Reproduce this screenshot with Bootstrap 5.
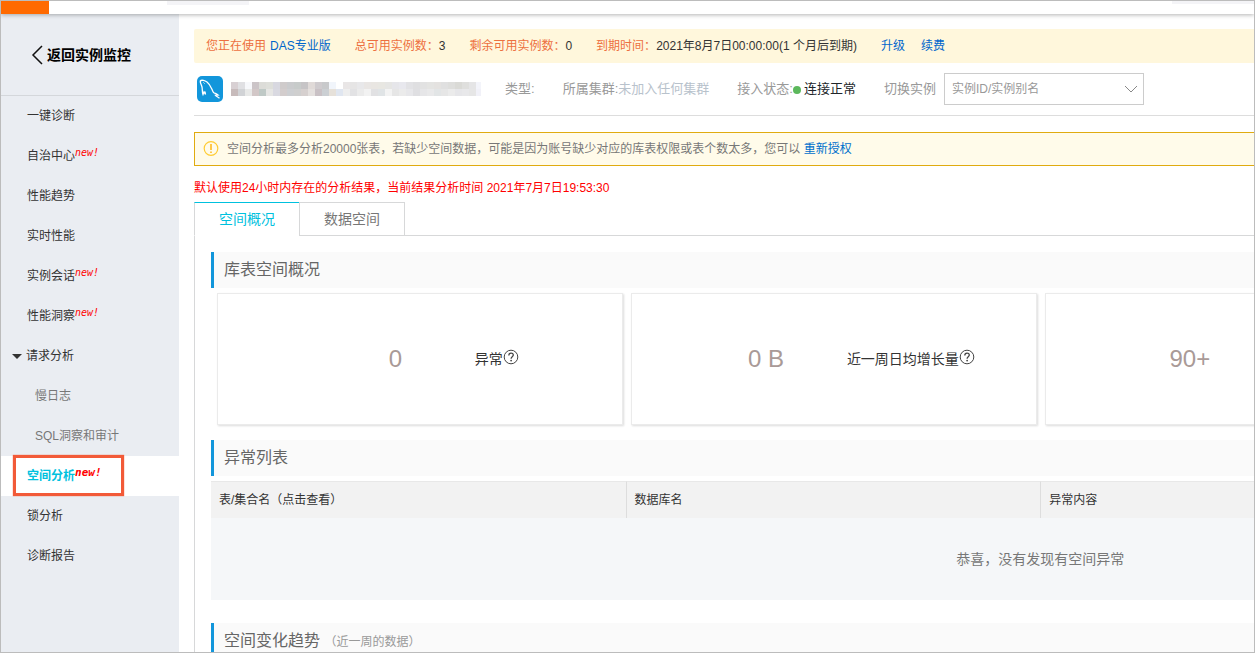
<!DOCTYPE html>
<html lang="zh-CN">
<head>
<meta charset="utf-8">
<meta name="viewport" content="width=device-width, initial-scale=1">
<title>空间分析</title>
<link href="https://cdn.jsdelivr.net/npm/bootstrap@5.3.0/dist/css/bootstrap.min.css" rel="stylesheet">
<style>
body{font:12px/20px "Liberation Sans","Noto Sans CJK SC",sans-serif;color:#333}
a{text-decoration:none;color:#06c}
.shell{border:1px solid #bcbcbc}
.topbar{height:13px;box-shadow:0 1px 4px rgba(0,0,0,.3);z-index:2}
.brand-block{width:48px;background:#ff6a00}
.top-field{width:82px;height:4px;background:#f4f4f7;margin-left:118px}
.top-end{width:82px;height:3px;background:#f4f4f7}
.side{width:178px;background:#eaedf2}
.back{height:82px;border-bottom:1px solid #d4d7db;font-size:14px;font-weight:700;color:#000;padding-left:30px}
.side .nav-link{height:40px;padding:0 0 0 26px;color:#333;display:flex;align-items:center;position:relative}
.side .sub{padding-left:34px;color:#777}
.side .group{padding-left:11px}
.side .active{background:#fff;color:#00c1de;font-weight:700}
.side .active::after{content:"";position:absolute;left:12px;top:-1px;width:111px;height:41px;border:3px solid #f25a38;box-shadow:0 0 1px #f25a38}
.new-tag{font:italic 10px/12px "DejaVu Sans Mono",monospace;color:#f00;margin-bottom:6px}
.active .new-tag{font-size:11px;font-weight:700}
.main{padding:15px 0 0 15px;min-width:0}
.plan{height:34px;background:#fff7dc;padding-left:12px;border-radius:2px 0 0 2px}
.hot{color:#ed7040}
.instance{height:53px;border-bottom:1px solid #ddd;font-size:13px;color:#999;padding-left:3px}
.masked{width:250px;height:14px}
.cluster{color:#b8c2cc}
.dot{width:8px;height:8px;background:#5cb85c;margin:2px 3px 0 0}
.picker{width:200px;height:32px;border:1px solid #ccc;border-radius:0;padding:0 7px;font-size:12px;color:#999;background:none;appearance:none}
.picker-arrow{right:6px;top:12px;pointer-events:none}
.notice{height:34px;margin-top:16px;border:1px solid #e0ab10;border-right:0;background:#fffbea;padding-left:8px;color:#777}
.notice a{color:#0070cc}
.result-time{color:#f00;margin-top:12px}
.tabs{margin-top:4px;border-bottom:1px solid #d7d8d9}
.tabs .nav-link{height:34px;width:106px;padding:0;border:1px solid #d7d8d9;border-radius:0;font-size:14px;color:#777;margin-bottom:-1px;background:#fff}
.tabs .nav-link.active{color:#00c1de;border-top-color:#00c1de;border-bottom-color:#fff}
.tabs .nav-item+.nav-item{margin-left:-1px}
.panel{border-left:1px solid #d7d8d9;padding:16px 0 0 16px}
/* four statistics columns; the report runs out past the right edge */
.report{width:159%}
.section-title{height:36px;border-left:3px solid #1296db;background:#fafafa;font-size:16px;line-height:36px;padding-left:10px;margin:0;color:#666;font-weight:400}
.section-note{font-size:12px;color:#999}
.stats{padding:5px 0 15px 6px;margin-right:-4px}
.stat{height:132px;border:1px solid #ebebeb;box-shadow:1px 1px 2px rgba(0,0,0,.14);margin-right:8px;font-size:14px}
.stat-value{font-size:24px;color:#a99a97;width:50%;text-align:right}
.stat-errors{padding-right:18px}
.stat-growth{padding-right:50px}
.stat-days{padding-right:38px}
.stat-label{width:38%}
.abnormal{margin:5px 0 23px;table-layout:fixed;width:100%;border-collapse:separate;border-spacing:0}
.abnormal th{height:37px;background:#f2f2f2;border-top:1px solid #e8e8e8;font-weight:400;padding:0 8px}
.abnormal th+th{border-left:1px solid #ddd}
.abnormal td{height:82px;background:#f5f7f9;text-align:center;font-size:14px;color:#777}
</style>
</head>
<body>
<svg class="d-none">
<symbol id="help" viewBox="0 0 16 16"><circle cx="8" cy="8" r="6.800" fill="none" stroke="#444"/><path d="M5.800 6.400c0-3 4.500-3 4.500-.3 0 1.700-2.200 1.700-2.200 3.600" fill="none" stroke="#444" stroke-width="1.300"/><circle cx="8.100" cy="11.600" r=".9" fill="#444"/></symbol>
</svg>
<div class="shell vh-100 d-flex flex-column overflow-hidden">
<header class="topbar d-flex bg-white position-relative flex-shrink-0">
<div class="brand-block"></div><div class="top-field"></div><div class="top-end ms-auto"></div>
</header>
<div class="d-flex flex-grow-1 overflow-hidden">
<aside class="side flex-shrink-0">
<a href="#" class="back d-flex align-items-center"><svg width="12" height="20" viewBox="0 0 12 20" class="me-1"><path d="M11 1L2 10l9 9" fill="none" stroke="#111" stroke-width="1.500"/></svg>返回实例监控</a>
<nav class="nav flex-column flex-nowrap">
<a class="nav-link" href="#">一键诊断</a>
<a class="nav-link" href="#">自治中心<span class="new-tag">new!</span></a>
<a class="nav-link" href="#">性能趋势</a>
<a class="nav-link" href="#">实时性能</a>
<a class="nav-link" href="#">实例会话<span class="new-tag">new!</span></a>
<a class="nav-link" href="#">性能洞察<span class="new-tag">new!</span></a>
<a class="nav-link group" href="#"><svg width="10" height="5" class="me-1"><path d="M0 0h10L5 5z" fill="#333"/></svg>请求分析</a>
<a class="nav-link sub" href="#">慢日志</a>
<a class="nav-link sub" href="#">SQL洞察和审计</a>
<a class="nav-link active" href="#">空间分析<span class="new-tag">new!</span></a>
<a class="nav-link" href="#">锁分析</a>
<a class="nav-link" href="#">诊断报告</a>
</nav>
</aside>
<main class="main flex-grow-1 overflow-hidden">
<div class="plan d-flex align-items-center text-nowrap">
<span class="hot me-1">您正在使用</span><a href="#" class="me-4">DAS专业版</a>
<span class="hot">总可用实例数：</span><span class="me-4">3</span>
<span class="hot">剩余可用实例数：</span><span class="me-4">0</span>
<span class="hot">到期时间：</span><span class="me-4">2021年8月7日00:00:00(1 个月后到期)</span>
<a href="#" class="me-3">升级</a><a href="#">续费</a>
</div>
<div class="instance d-flex align-items-center text-nowrap">
<svg width="26" height="26" viewBox="0 0 26 26" class="flex-shrink-0"><rect width="26" height="26" rx="5" fill="#1296db"/><path d="M8.500 18.500L7 16l-1 2.500C5 16 5.500 13 5 11 4.500 9 3 7 3.300 5 4.500 3.500 8 4.500 10 6c4 3 4.500 7 6.500 10.500 1.500 1 2.500 1 4.500 2.500l-2.500.3c1 1.200 2.500 1.500 4 3M8.500 18.500l-.5-3" fill="none" stroke="#fff" stroke-width="1.300"/><path d="M6.500 6.500l1 1" stroke="#fff"/></svg>
<svg class="masked flex-shrink-0 ms-2" id="masked" role="img" aria-label="实例名称" shape-rendering="crispEdges"></svg>
<span class="ms-4">类型:</span>
<span class="ms-4 ps-1">所属集群:</span><span class="cluster">未加入任何集群</span>
<span class="ms-4 ps-1">接入状态:</span><span class="dot rounded-circle"></span><span class="text-dark">连接正常</span>
<label for="picker" class="ms-4 me-2 ps-1">切换实例</label>
<div class="position-relative"><select id="picker" class="picker"><option>实例ID/实例别名</option></select><svg class="picker-arrow position-absolute" width="14" height="9"><path d="M1 1l6 6 6-6" fill="none" stroke="#888"/></svg></div>
</div>
<div class="notice d-flex align-items-center text-nowrap"><svg width="16" height="16" class="me-2"><circle cx="8" cy="7.500" r="6.800" fill="none" stroke="#fc3" stroke-width="1.200"/><path d="M8 3v6M8 10.500v1.500" stroke="#fb2" stroke-width="1.600"/></svg><span>空间分析最多分析20000张表，若缺少空间数据，可能是因为账号缺少对应的库表权限或表个数太多，您可以 <a href="#">重新授权</a></span></div>
<div class="result-time">默认使用24小时内存在的分析结果，当前结果分析时间 2021年7月7日19:53:30</div>
<ul class="nav tabs" role="tablist">
<li class="nav-item" role="presentation"><button type="button" class="nav-link active" role="tab" aria-selected="true">空间概况</button></li>
<li class="nav-item" role="presentation"><button type="button" class="nav-link" role="tab" aria-selected="false">数据空间</button></li>
</ul>
<div class="panel"><div class="report">
<h2 class="section-title">库表空间概况</h2>
<div class="stats row g-0 flex-nowrap">
<div class="col-3"><div class="stat d-flex align-items-center"><span class="stat-value stat-errors">0</span><span class="stat-label d-flex justify-content-center align-items-center text-nowrap">异常<svg width="16" height="16" class="mb-1"><use href="#help"/></svg></span></div></div>
<div class="col-3"><div class="stat d-flex align-items-center"><span class="stat-value stat-growth">0 B</span><span class="stat-label d-flex justify-content-center align-items-center text-nowrap">近一周日均增长量<svg width="16" height="16" class="mb-1"><use href="#help"/></svg></span></div></div>
<div class="col-3"><div class="stat d-flex align-items-center"><span class="stat-value stat-days">90+</span></div></div>
<div class="col-3"><div class="stat"></div></div>
</div>
<h2 class="section-title">异常列表</h2>
<table class="abnormal">
<thead><tr><th scope="col">表/集合名（点击查看）</th><th scope="col">数据库名</th><th scope="col">异常内容</th><th scope="col"></th></tr></thead>
<tbody><tr><td colspan="4">恭喜，没有发现有空间异常</td></tr></tbody>
</table>
<h2 class="section-title">空间变化趋势 <span class="section-note">（近一周的数据）</span></h2>
</div></div>
</main>
</div>
</div>
<script src="https://cdn.jsdelivr.net/npm/bootstrap@5.3.0/dist/js/bootstrap.bundle.min.js"></script>
<script>
// mosaic that hides the instance name
const rows = [
  'd8d0d3 e0e0e3 f7f8fb cbc4c7 dcdcd8 dedfda d8d8e0 cfcbcb cacbcd c7cbca c6c4c6 e0dad8 cfcbce c8c9cb f1f5fb ffffff e9e6e6 e6e5e5 e8e8ea e9e6e4 e9e6e2 e8e7e2 e6e6e4 e6e6ea e8e8ee e2e2e5 dfdfe1 e2e2e2 e4e4e2 e4e2e0 e0e0e0 dededc dadad6 dfdfdd e5e5e6 f3f4fa',
  'c7bbbb d1d3d6 e8e9e8 d2c7c7 bfc9c6 e6e6e4 d9d9e1 d3cdcd cdcfd2 cfcfcf d6d0cf e4e0de c9c1c5 cbcfd3 e6e1da e0e6f0 eeeeee e2e2e4 ebebeb f2f2f2 e1e1e3 e0e4e6 f3f3f3 e6e6e6 ebebeb e7e7ea dfdfe2 e6e6e8 e9e9ea e2e5e6 e6e6e6 ebebeb e6e6e9 e8e8ea e6e6e6 f1f1f8'
];
document.getElementById('masked').innerHTML = rows.map((row, y) =>
  row.split(' ').map((c, x) => `<rect x="${x * 7}" y="${y * 7}" width="7" height="7" fill="#${c}"/>`).join('')
).join('');
</script>
</body>
</html>
